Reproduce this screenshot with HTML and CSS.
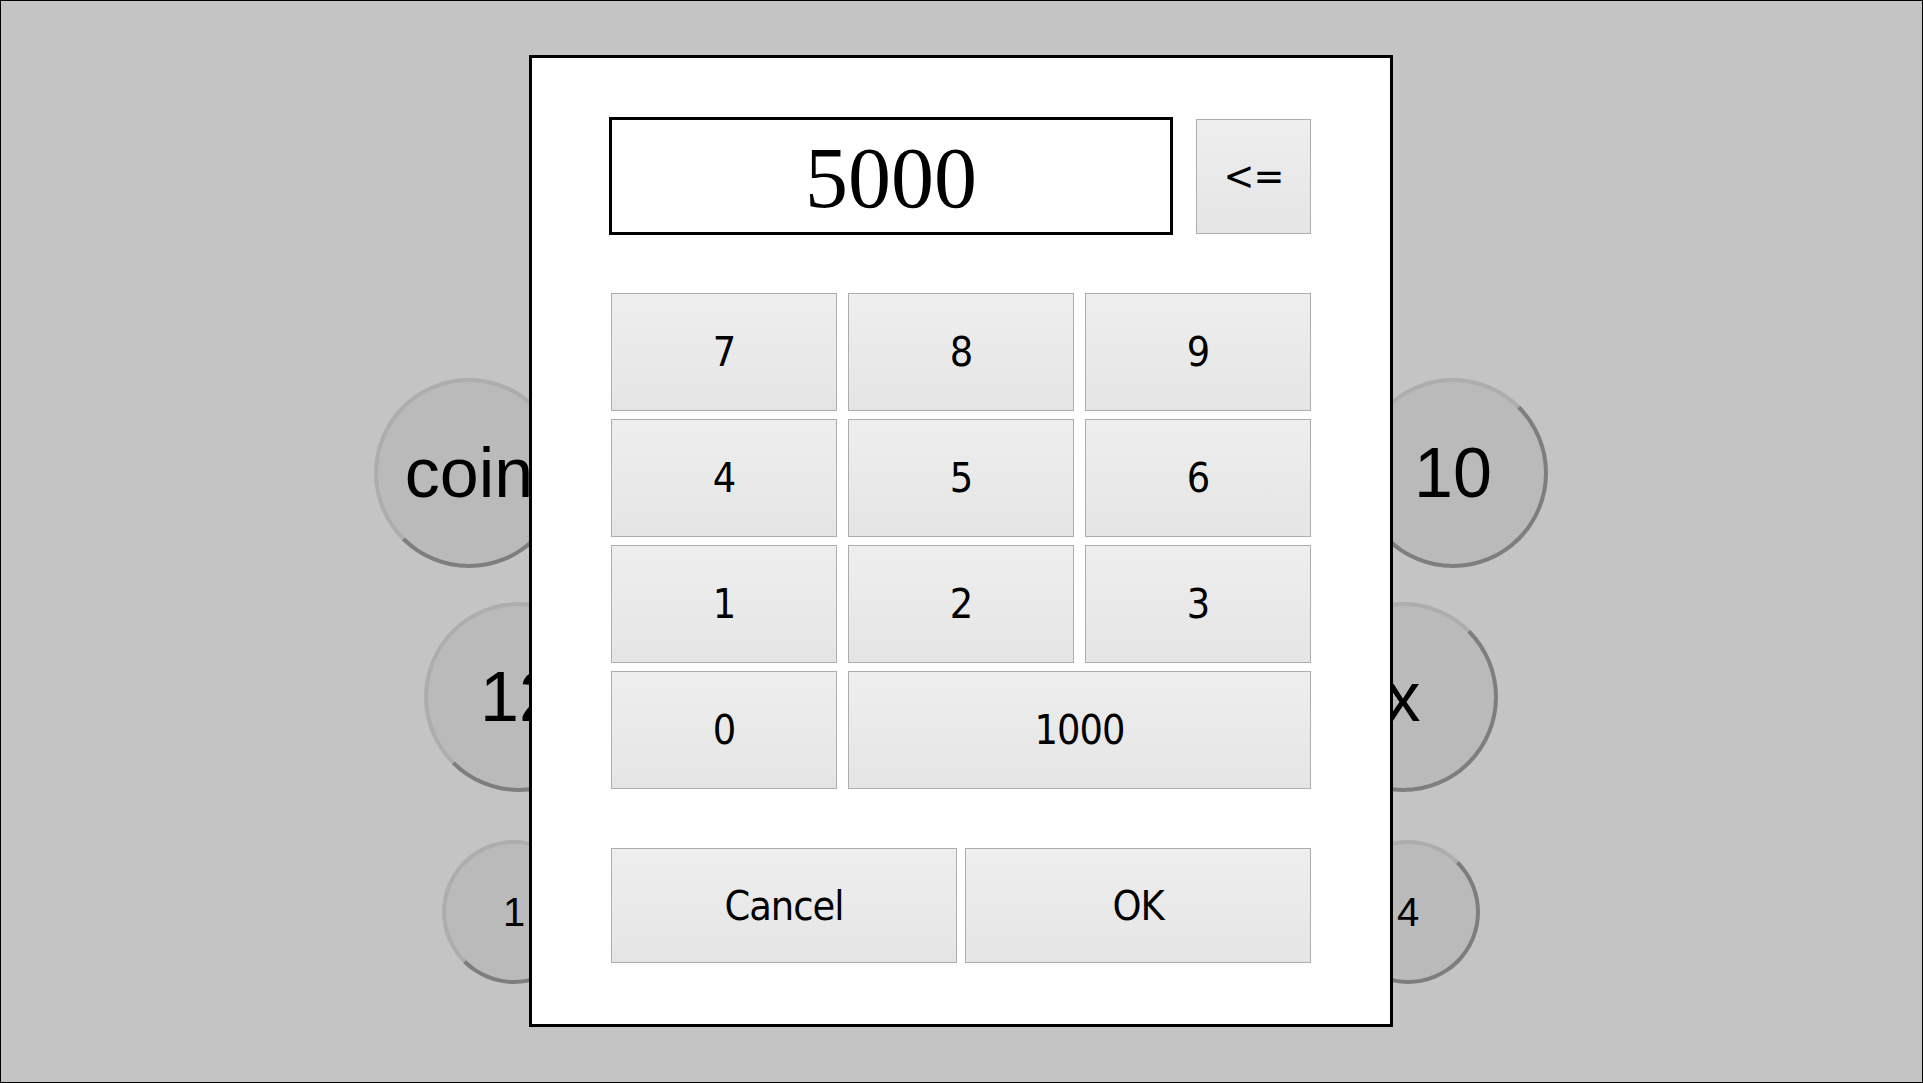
FILE: index.html
```html
<!DOCTYPE html>
<html>
<head>
<meta charset="utf-8">
<link rel="stylesheet" href="styles.css">
</head>
<body>
<div class="screen">
  <div class="wheel">
    <div class="coin big c-left-1"><span>coin</span></div>
    <div class="coin big c-left-2"><span>12</span></div>
    <div class="coin small c-left-3"><span>1</span></div>
    <div class="coin big c-right-1"><span>10</span></div>
    <div class="coin big c-right-2"><span>x</span></div>
    <div class="coin small c-right-3"><span>4</span></div>
  </div>
  <div class="overlay">
    <div class="dialog">
      <div class="top-row">
        <div class="display">5000</div>
        <button class="btn back">&lt;=</button>
      </div>
      <div class="keypad">
        <button class="btn">7</button>
        <button class="btn">8</button>
        <button class="btn">9</button>
        <button class="btn">4</button>
        <button class="btn">5</button>
        <button class="btn">6</button>
        <button class="btn">1</button>
        <button class="btn">2</button>
        <button class="btn">3</button>
        <button class="btn">0</button>
        <button class="btn wide">1000</button>
      </div>
      <div class="actions">
        <button class="btn">Cancel</button>
        <button class="btn">OK</button>
      </div>
    </div>
  </div>
</div>
</body>
</html>
```

FILE: styles.css
```css
html, body {
  margin: 0;
  padding: 0;
}
body {
  width: 1923px;
  height: 1083px;
  overflow: hidden;
}
.screen {
  position: relative;
  box-sizing: border-box;
  width: 1923px;
  height: 1083px;
  border: 1px solid #000;
  background: #c4c4c4;
}
.wheel {
  position: absolute;
  inset: 0;
}
.coin {
  position: absolute;
  box-sizing: border-box;
  border-radius: 50%;
  border: 4px solid;
  border-color: #adadad #7e7e7e #7e7e7e #adadad;
  background: #bababa;
  display: flex;
  align-items: center;
  justify-content: center;
  font-family: "Liberation Sans", Arial, sans-serif;
  color: #000;
}
.coin.big {
  width: 190px;
  height: 190px;
  font-size: 70px;
}
.coin.small {
  width: 144px;
  height: 144px;
  font-size: 40px;
}
.c-left-1 { left: 373px; top: 377px; }
.c-left-2 { left: 423px; top: 601px; }
.c-left-3 { left: 441px; top: 839px; }
.c-right-1 { left: 1357px; top: 377px; }
.c-right-2 { left: 1307px; top: 601px; }
.c-right-3 { left: 1335px; top: 839px; }

.overlay {
  position: absolute;
  inset: 0;
  display: flex;
  align-items: flex-start;
  justify-content: flex-start;
  padding: 54px 0 0 528px;
}
.dialog {
  box-sizing: border-box;
  width: 864px;
  height: 972px;
  border: 3px solid #000;
  background: #fff;
  padding: 59px 79px 0 77px;
  display: flex;
  flex-direction: column;
}
.top-row {
  display: flex;
  align-items: center;
  gap: 23px;
  height: 118px;
}
.display {
  box-sizing: border-box;
  width: 564px;
  height: 118px;
  border: 3px solid #000;
  background: #fff;
  display: flex;
  align-items: center;
  justify-content: center;
  font-family: "Liberation Serif", "Times New Roman", serif;
  font-size: 86px;
  color: #000;
  padding-top: 4px;
}
.btn {
  box-sizing: border-box;
  margin: 0;
  padding: 0;
  border: 1px solid #adadad;
  border-radius: 0;
  background: linear-gradient(#eeeeee, #e5e5e5);
  font-family: "DejaVu Sans Condensed", "DejaVu Sans", sans-serif;
  font-stretch: condensed;
  font-size: 41px;
  letter-spacing: -1px;
  color: #000;
  display: flex;
  align-items: center;
  justify-content: center;
}
.back {
  width: 115px;
  height: 115px;
}
.keypad {
  margin: 58px 0 0 2px;
  display: grid;
  grid-template-columns: repeat(3, 226px);
  grid-auto-rows: 118px;
  column-gap: 11px;
  row-gap: 8px;
}
.wide {
  grid-column: span 2;
}
.actions {
  margin: 59px 0 0 2px;
  display: grid;
  grid-template-columns: 346px 346px;
  column-gap: 8px;
  height: 115px;
}
```
